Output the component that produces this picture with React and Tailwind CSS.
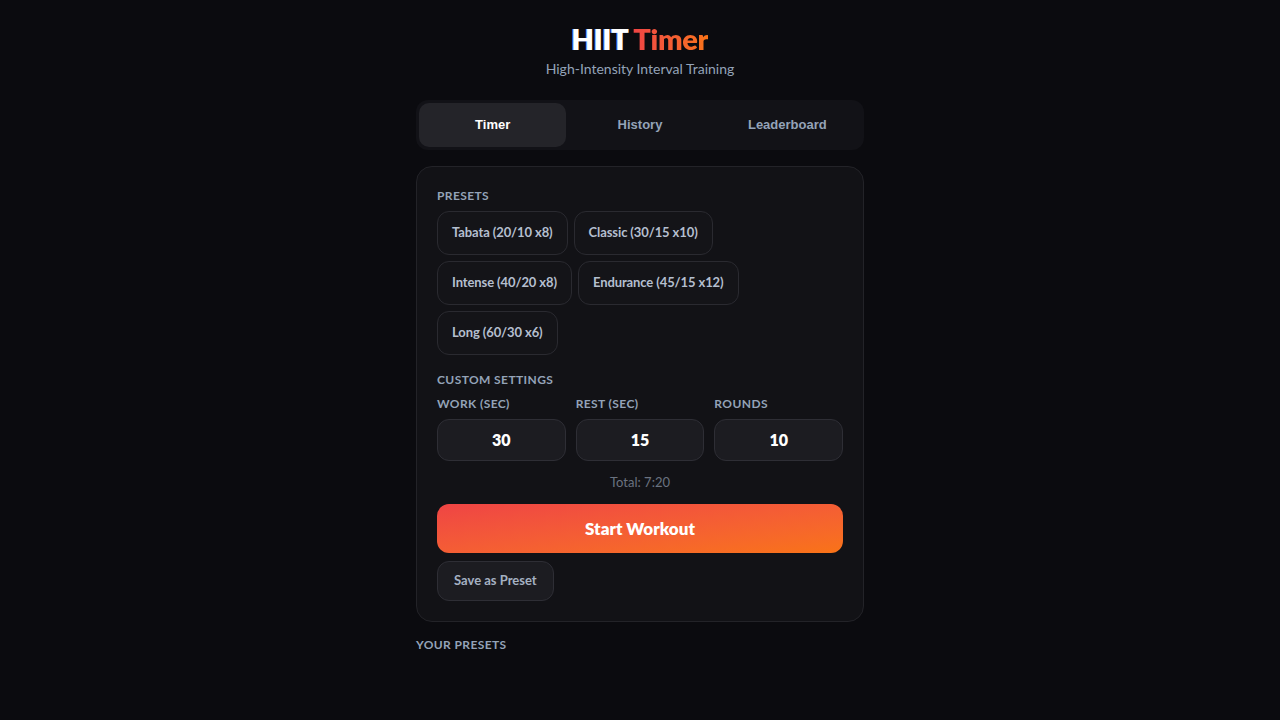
import React from "react";

const presets = [
  ["Tabata (20/10 x8)"],
  ["Classic (30/15 x10)"],
  ["Intense (40/20 x8)"],
  ["Endurance (45/15 x12)"],
  ["Long (60/30 x6)"],
];

export default function App() {
  const font = { fontFamily: "Lato, 'Noto Sans', sans-serif" };
  return (
    <div className="min-h-[720px] w-full bg-[#0b0b0f]" style={font}>
      <div className="mx-auto w-[448px] pt-[22px]">
        <div className="flex flex-col items-center">
          <h1 className="text-[29px] font-extrabold leading-[33px] tracking-[-0.3px]">
            <span className="text-white [text-shadow:-1px_0_0_#7aa2ff]">HIIT</span>{" "}
            <span className="bg-gradient-to-r from-[#ef4444] to-[#f97316] bg-clip-text text-transparent">Timer</span>
          </h1>
          <p className="mt-[6px] text-[14px] leading-[16px] text-[#94a3b8]">High-Intensity Interval Training</p>
        </div>

        <div
          className="mt-[23px] grid h-[50px] grid-cols-3 rounded-xl bg-[#121217] p-[3px]"
          style={{ fontFamily: "'Liberation Sans', Arial, sans-serif" }}
        >
          <div className="flex items-center justify-center rounded-[10px] bg-[#242429] text-[13px] font-bold text-white">
            Timer
          </div>
          <div className="flex items-center justify-center text-[13px] font-bold text-[#94a3b8]">History</div>
          <div className="flex items-center justify-center text-[13px] font-bold text-[#94a3b8]">Leaderboard</div>
        </div>

        <div className="mt-[16px] rounded-2xl border border-[#232328] bg-[#121216] px-[20px] pb-[20px] pt-[22px]">
          <div className="text-[12px] font-bold leading-[14px] tracking-[0.4px] text-[#94a3b8]">PRESETS</div>
          <div className="mt-[8px] flex w-[330px] flex-wrap gap-[6px]">
            {presets.map(([p]) => (
              <button
                key={p}
                className="h-[44px] rounded-xl border border-[#2a2a30] bg-[#141418] px-[14px] text-[13px] font-bold tracking-[-0.1px] text-[#b4bfcf]"
              >
                {p}
              </button>
            ))}
          </div>

          <div className="mt-[18px] text-[12px] font-bold leading-[14px] tracking-[0.4px] text-[#94a3b8]">CUSTOM SETTINGS</div>
          <div className="mt-[10px] grid grid-cols-3 gap-[10px]">
            {[
              ["WORK (SEC)", "30"],
              ["REST (SEC)", "15"],
              ["ROUNDS", "10"],
            ].map(([l, v]) => (
              <div key={l} className="flex flex-col">
                <div className="text-[12px] font-bold leading-[14px] tracking-[0.4px] text-[#94a3b8]">{l}</div>
                <div className="mt-[8px] flex h-[42px] items-center justify-center rounded-xl border border-[#2e2e35] bg-[#1c1c21] text-[16px] font-extrabold text-white">
                  {v}
                </div>
              </div>
            ))}
          </div>

          <div className="mt-[13px] text-center text-[13px] leading-[16px] text-[#6b7280]">Total: 7:20</div>

          <button className="mt-[14px] flex h-[49px] w-full items-center justify-center rounded-xl bg-gradient-to-br from-[#ef4444] to-[#f97316] text-[17px] font-extrabold text-white">
            Start Workout
          </button>

          <button className="mt-[8px] h-[40px] rounded-xl border border-[#2e2e35] bg-[#1c1c21] px-[16px] text-[13px] font-bold text-[#a5b1c2]">
            Save as Preset
          </button>
        </div>

        <div className="mt-[16px] text-[12px] font-bold leading-[14px] tracking-[0.4px] text-[#94a3b8]">YOUR PRESETS</div>
      </div>
    </div>
  );
}
